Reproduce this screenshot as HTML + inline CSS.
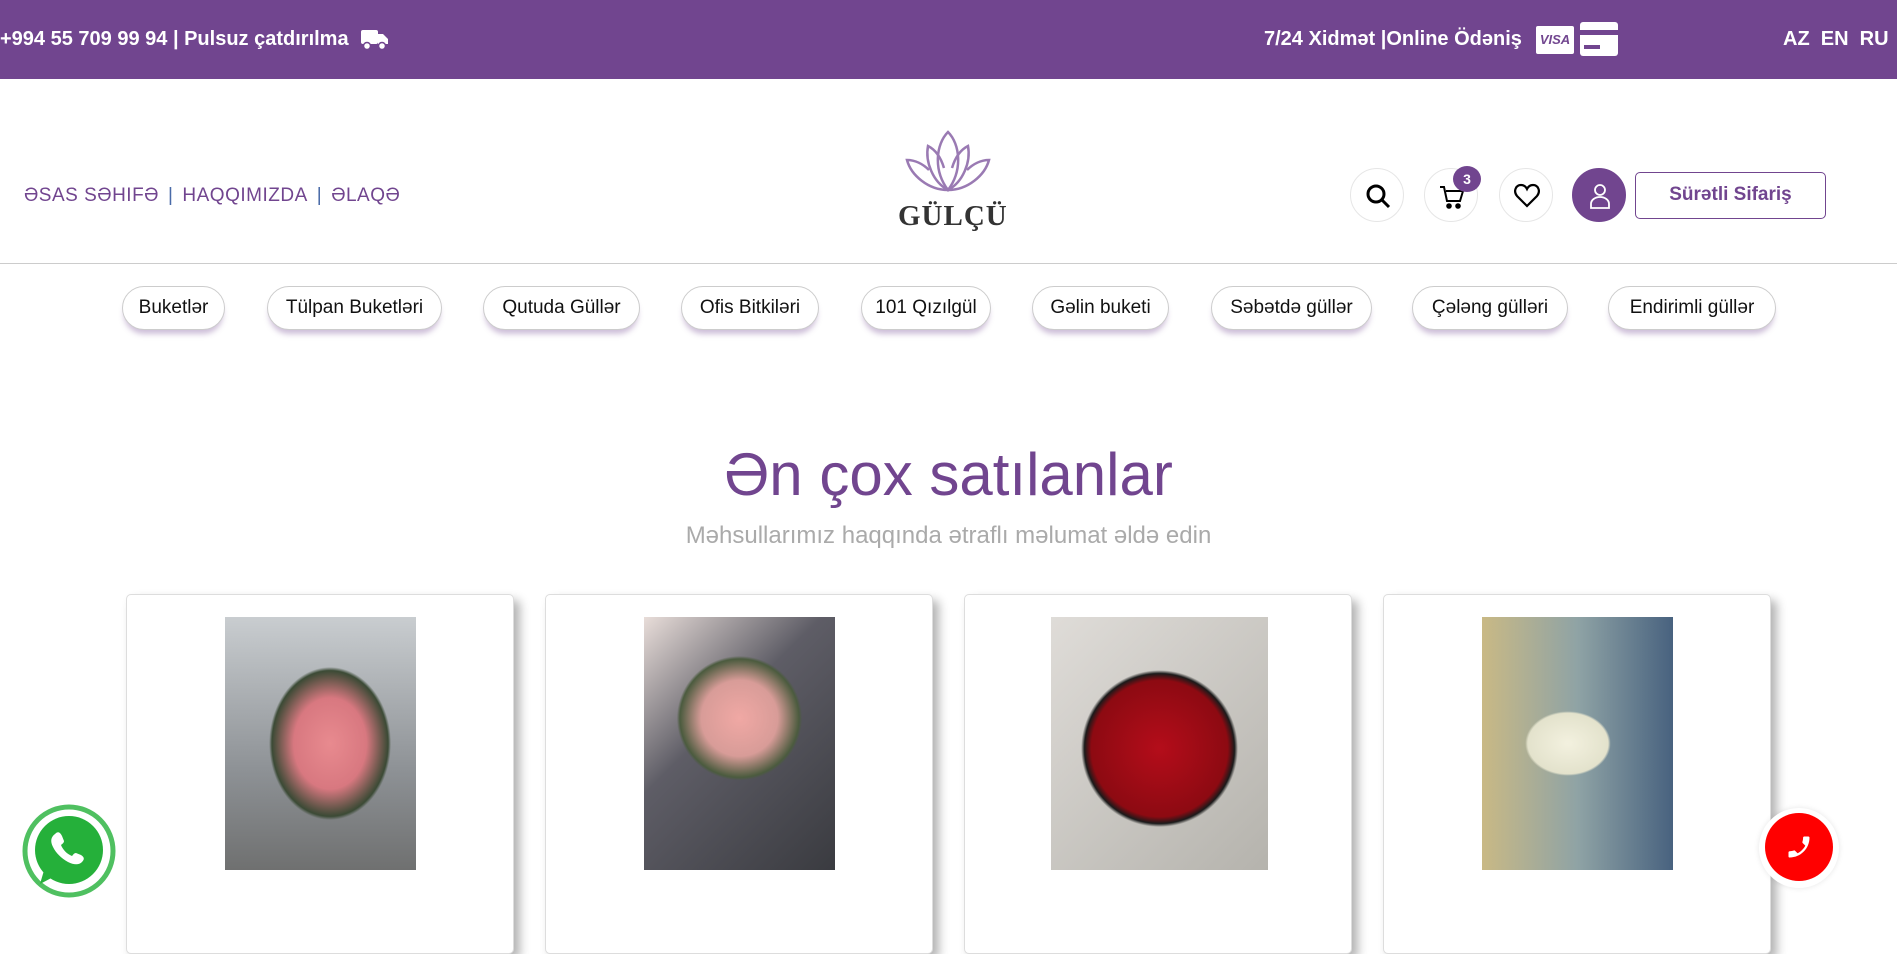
<!DOCTYPE html>
<html><head><meta charset="utf-8"><style>
*{margin:0;padding:0;box-sizing:border-box}
body{width:1897px;height:921px;overflow:hidden;background:#fff;font-family:"Liberation Sans",sans-serif;position:relative}
.top{position:absolute;left:0;top:0;width:1897px;height:79px;background:#71458f;color:#fff;font-weight:bold;font-size:20px}
.top span{position:absolute;top:28px;white-space:nowrap}
.nav{position:absolute;left:24px;top:185px;color:#71458f;font-size:19px;letter-spacing:.5px;white-space:nowrap}
.nav i{font-style:normal;color:#4a6ba8;margin:0 9px}
.hr{position:absolute;left:0;top:263px;width:1897px;height:1px;background:#ccc}
.ic{position:absolute;top:168px;width:54px;height:54px;border-radius:50%;border:1px solid #e6e6e6;background:#fff}
.ic svg{position:absolute;left:13px;top:13px}
.pill{position:absolute;top:286px;height:44px;border-radius:22px;background:#fff;border:1px solid #ccc;box-shadow:0 6px 6px -2px rgba(113,69,143,.35);font-size:19px;display:flex;align-items:center;justify-content:center;color:#111;white-space:nowrap}
h1{position:absolute;left:0;width:1897px;top:440px;text-align:center;font-weight:normal;color:#71458f;font-size:60px}
.sub{position:absolute;left:0;width:1897px;top:522px;text-align:center;color:#aaa;font-size:24px}
.card{position:absolute;top:594px;width:388px;height:360px;background:#fff;border:1px solid #ddd;border-radius:5px;box-shadow:6px 6px 10px rgba(0,0,0,.3)}
.img{position:absolute;top:22px;width:191px;height:253px}
</style></head><body>
<div class="top">
<span style="left:0">+994 55 709 99 94 | Pulsuz çatdırılma</span>
<svg style="position:absolute;left:361px;top:28px" width="28" height="24" viewBox="0 0 28 24"><rect x="0" y="2" width="17" height="14" rx="2" fill="#fff"/><path d="M17 6h5l5 5v5H17z" fill="#fff"/><circle cx="6" cy="18" r="3.5" fill="#fff" stroke="#71458f" stroke-width="1.5"/><circle cx="21" cy="18" r="3.5" fill="#fff" stroke="#71458f" stroke-width="1.5"/></svg>
<span style="left:1264px">7/24 Xidmət |Online Ödəniş</span>
<div style="position:absolute;left:1536px;top:26px;width:38px;height:28px;background:#fff;border-radius:2px;color:#71458f;font-size:13px;font-style:italic;font-weight:bold;text-align:center;line-height:28px">VISA</div>
<div style="position:absolute;left:1580px;top:22px;width:38px;height:34px;background:#fff;border-radius:3px"><div style="position:absolute;left:0;top:8px;width:38px;height:5px;background:#71458f"></div><div style="position:absolute;left:4px;top:23px;width:16px;height:4px;background:#71458f"></div></div>
<span style="left:1783px">AZ&nbsp; EN&nbsp; RU</span>
</div>
<div class="nav">ƏSAS SƏHIFƏ<i>|</i>HAQQIMIZDA<i>|</i>ƏLAQƏ</div>
<svg style="position:absolute;left:903px;top:130px" width="90" height="62" viewBox="0 0 90 62" fill="none" stroke="#9a7ab3" stroke-width="2.5"><path d="M45 2C33 14 30 40 45 60C60 40 57 14 45 2Z"/><path d="M45 60C30 52 22 32 25 16C33 20 38 28 41 38"/><path d="M45 60C60 52 68 32 65 16C57 20 52 28 49 38"/><path d="M45 60C25 60 8 45 4 30C12 30 20 34 26 40"/><path d="M45 60C65 60 82 45 86 30C78 30 70 34 64 40"/></svg>
<div style="position:absolute;left:898px;top:200px;width:100px;text-align:center;font-family:'Liberation Serif',serif;font-size:29px;color:#333;letter-spacing:1px;font-weight:bold">GÜLÇÜ</div>
<div class="ic" style="left:1350px"><svg width="28" height="28" viewBox="0 0 28 28" fill="none" stroke="#000" stroke-width="3"><circle cx="12" cy="12" r="8"/><path d="M18 18l7 7"/></svg></div>
<div class="ic" style="left:1424px"><svg width="28" height="28" viewBox="0 0 28 28" fill="none" stroke="#000" stroke-width="2"><path d="M2 5h4l3 14h13l3-10H8"/><circle cx="11" cy="24" r="1.8" fill="#000"/><circle cx="20" cy="24" r="1.8" fill="#000"/></svg></div>
<div style="position:absolute;left:1453px;top:166px;width:28px;height:26px;border-radius:50%;background:#71458f;color:#fff;font-weight:bold;font-size:14px;text-align:center;line-height:26px">3</div>
<div class="ic" style="left:1499px"><svg width="28" height="28" viewBox="0 0 28 28" fill="none" stroke="#000" stroke-width="2.2"><path d="M14 24L4 14C0 9 3 3 8 3c3 0 5 2 6 4c1-2 3-4 6-4c5 0 8 6 4 11z"/></svg></div>
<div class="ic" style="left:1572px;border-color:#71458f;background:#71458f"><svg width="28" height="28" viewBox="0 0 28 28" fill="none" stroke="#fff" stroke-width="1.8"><circle cx="14" cy="8" r="5"/><path d="M5 26v-4c0-4 4-7 9-7s9 3 9 7v4z"/></svg></div>
<div style="position:absolute;left:1635px;top:172px;width:191px;height:47px;border:1.5px solid #71458f;border-radius:5px;color:#71458f;font-weight:bold;font-size:19px;text-align:center;line-height:44px">Sürətli Sifariş</div>
<div class="hr"></div>
<div class="pill" style="left:122px;width:103px">Buketlər</div>
<div class="pill" style="left:267px;width:175px">Tülpan Buketləri</div>
<div class="pill" style="left:483px;width:157px">Qutuda Güllər</div>
<div class="pill" style="left:681px;width:138px">Ofis Bitkiləri</div>
<div class="pill" style="left:861px;width:130px">101 Qızılgül</div>
<div class="pill" style="left:1032px;width:137px">Gəlin buketi</div>
<div class="pill" style="left:1211px;width:161px">Səbətdə güllər</div>
<div class="pill" style="left:1412px;width:156px">Çələng gülləri</div>
<div class="pill" style="left:1608px;width:168px">Endirimli güllər</div>
<h1>Ən çox satılanlar</h1>
<div class="sub">Məhsullarımız haqqında ətraflı məlumat əldə edin</div>
<div class="card" style="left:126px"><div class="img" style="left:98px;background:radial-gradient(ellipse 38% 36% at 55% 50%,#e88a8f 0,#d87880 50%,#3b4a35 80%,transparent 84%),linear-gradient(#c9cdd0,#8e9296 60%,#6f7070)"></div></div>
<div class="card" style="left:545px"><div class="img" style="left:98px;background:radial-gradient(ellipse 40% 30% at 50% 40%,#f0a8a4 0,#d89c98 50%,#4b5b3e 78%,transparent 82%),linear-gradient(135deg,#e8ddd9 0,#5e5d66 40%,#3a3b40)"></div></div>
<div class="card" style="left:964px"><div class="img" style="left:86px;width:217px;background:radial-gradient(circle at 50% 52%,#b40d1a 0,#8d0a12 40%,#1a1a1a 44%,transparent 46%),linear-gradient(135deg,#dfdcd8,#b5b3ad)"></div></div>
<div class="card" style="left:1383px"><div class="img" style="left:98px;background:radial-gradient(ellipse 35% 20% at 45% 50%,#f3f1df 0,#e3e2cc 60%,transparent 64%),linear-gradient(90deg,#c9b985,#8fa3a5 50%,#48627f)"></div></div>
<svg style="position:absolute;left:22px;top:804px" width="94" height="94" viewBox="0 0 94 94"><circle cx="47" cy="47" r="44" fill="#fff" stroke="#4fc060" stroke-width="5"/><circle cx="47" cy="46" r="34" fill="#25b03a"/><path d="M18 80l5-17 12 8z" fill="#25b03a"/><path d="M33 30c3-3 5-2 7 2l2 5c0 2-2 3-3 4c2 5 6 9 11 11c1-1 2-3 4-3l5 2c3 2 4 4 1 7c-3 3-8 3-14 0c-7-4-12-9-15-15c-3-6-2-10 2-13z" fill="#fff"/></svg>
<div style="position:absolute;left:1759px;top:808px;width:80px;height:80px;border-radius:50%;background:#fff;box-shadow:0 0 6px rgba(0,0,0,.1)"></div>
<div style="position:absolute;left:1765px;top:813px;width:68px;height:68px;border-radius:50%;background:#f00"><svg style="position:absolute;left:20px;top:20px" width="28" height="28" viewBox="0 0 24 24"><g transform="translate(24 0) scale(-1 1)"><path d="M6.6 10.8c1.4 2.8 3.8 5.1 6.6 6.6l2.2-2.2c.3-.3.7-.4 1-.2 1.1.4 2.3.6 3.6.6.6 0 1 .4 1 1V20c0 .6-.4 1-1 1C10.6 21 3 13.4 3 4c0-.6.4-1 1-1h3.5c.6 0 1 .4 1 1 0 1.3.2 2.5.6 3.6.1.3 0 .7-.2 1z" fill="#fff"/></g></svg></div>
</body></html>
